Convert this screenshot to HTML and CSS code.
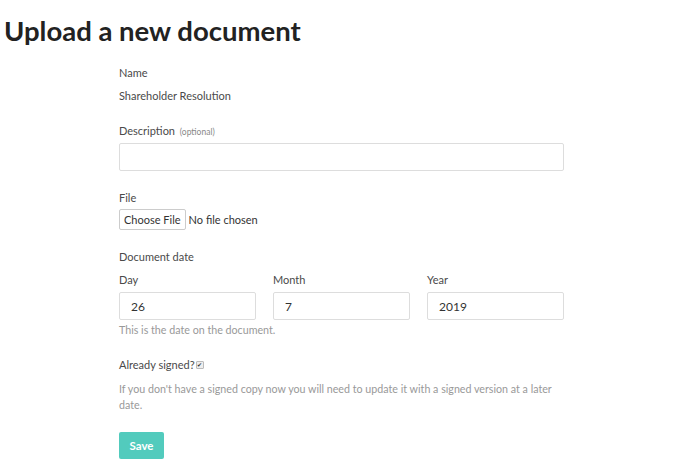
FILE: index.html
```html
<!DOCTYPE html>
<html lang="en">
    <head>
        <meta charset="UTF-8">
        <title>Upload a new document</title>
        <link rel="stylesheet" href="styles.css">
    </head>
    <body>
        <h1>Upload a new document</h1>

        <form class="doc-form">
            <!-- Name -->
            <div class="field">
                <label class="label">Name</label>
                <p class="static">Shareholder Resolution</p>
            </div>

            <!-- Description -->
            <div class="field">
                <label class="label" for="description">Description <span class="optional">(optional)</span></label>
                <input type="text" id="description" class="input">
            </div>

            <!-- File -->
            <div class="field">
                <label class="label">File</label>
                <div class="file-row">
                    <span class="file-btn">Choose File</span>
                    <span class="file-name">No file chosen</span>
                </div>
            </div>

            <!-- Document date -->
            <div class="field">
                <label class="label">Document date</label>
                <div class="date-row">
                    <div class="date-col">
                        <label class="sublabel" for="day">Day</label>
                        <input type="text" id="day" class="input" value="26">
                    </div>
                    <div class="date-col">
                        <label class="sublabel" for="month">Month</label>
                        <input type="text" id="month" class="input" value="7">
                    </div>
                    <div class="date-col">
                        <label class="sublabel" for="year">Year</label>
                        <input type="text" id="year" class="input" value="2019">
                    </div>
                </div>
                <p class="help help-date">This is the date on the document.</p>
            </div>

            <!-- Signed -->
            <div class="field">
                <label class="label check-label">Already signed?<span class="check">✔</span></label>
                <p class="help help-signed">If you don't have a signed copy now you will need to update it with a signed version at a later date.</p>
            </div>

            <button type="submit" class="save-btn">Save</button>
        </form>
    </body>
</html>
```

FILE: styles.css
```css
body {
    font-family: Lato, "Open Sans", sans-serif;
    background-color: #fff;
    color: #4a4a4a;
    margin: 0;
    padding: 0 4px;
}

h1 {
    font-size: 27.5px;
    font-weight: 700;
    color: #222;
    margin: 0;
    padding-top: 15px;
    line-height: 32px;
}

.doc-form {
    width: 445px;
    margin-left: 115px;
    padding-top: 18px;
}

.field {
    margin-bottom: 19px;
}

.label {
    display: block;
    font-size: 11px;
    line-height: 16px;
    margin-bottom: 3px;
}

.optional {
    font-size: 8.5px;
    color: #888;
    margin-left: 2px;
}

.static {
    font-size: 11px;
    line-height: 16px;
    margin: 7px 0 0;
}

.input {
    display: block;
    box-sizing: border-box;
    width: 100%;
    height: 28px;
    border: 1px solid #ddd;
    border-radius: 2px;
    padding: 0 11px;
    font-family: inherit;
    font-size: 12px;
    color: #333;
    margin: 0;
}

.file-row {
    display: flex;
    align-items: center;
    gap: 3px;
    margin-top: 1px;
    font-size: 11px;
    color: #333;
}

.file-btn {
    border: 1px solid #ccc;
    border-radius: 2px;
    padding: 2px 4px;
    line-height: 15px;
}

.date-row {
    display: flex;
    gap: 17px;
}

.date-col {
    flex: 1;
}

.sublabel {
    display: block;
    font-size: 11px;
    line-height: 16px;
    margin: 4px 0 4px;
}

.help {
    font-size: 10.7px;
    line-height: 16px;
    color: #999;
    margin: 0;
}

.help-date {
    margin-top: 2px;
}

.help-signed {
    margin-top: 8px;
}

.check-label {
    display: flex;
    align-items: center;
    margin-top: 2px;
}

.check {
    display: inline-block;
    width: 6px;
    height: 6px;
    border: 1px solid #bbb;
    border-radius: 1px;
    background-color: #eee;
    font-size: 6px;
    line-height: 6px;
    text-align: center;
    color: #333;
    margin-left: 1px;
}

.save-btn {
    background-color: #52cbbd;
    color: white;
    border: none;
    border-radius: 2px;
    font-family: inherit;
    font-weight: 700;
    font-size: 11.5px;
    width: 45px;
    height: 27px;
    padding: 0;
    cursor: pointer;
}
```
